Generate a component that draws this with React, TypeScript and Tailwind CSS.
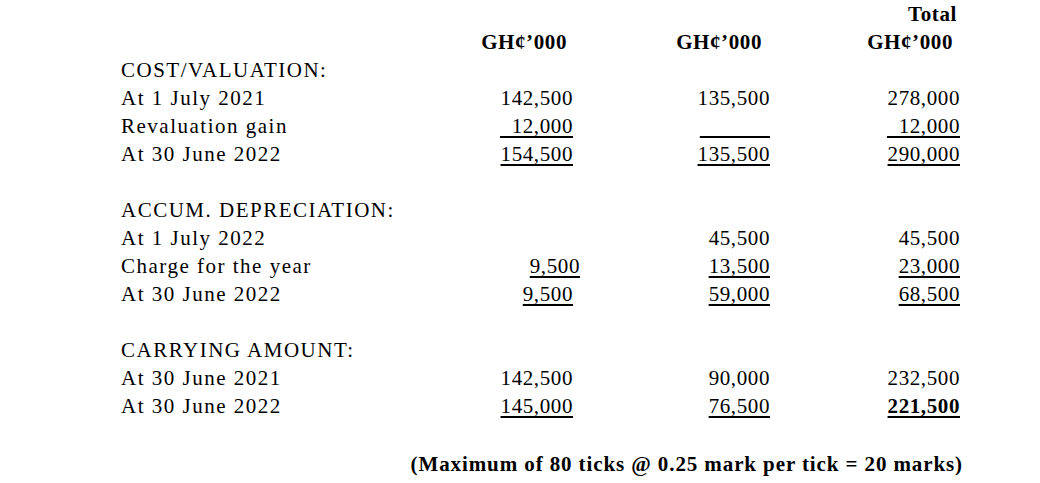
import React from "react";

// underlined figure, the way the source doc pads with spaces
const U = ({ children, bold = false }: { children: React.ReactNode; bold?: boolean }) => (
  <span
    className={`underline underline-offset-[3px] decoration-[1.5px] whitespace-pre ${bold ? "font-bold" : ""}`}
  >
    {children}
  </span>
);

type RowProps = {
  label?: React.ReactNode;
  c1?: React.ReactNode;
  c2?: React.ReactNode;
  c3?: React.ReactNode;
};

const Row = ({ label, c1, c2, c3 }: RowProps) => (
  <>
    <div className="h-[28px] whitespace-nowrap tracking-[1.5px]">{label}</div>
    <div className="h-[28px] text-right whitespace-nowrap">{c1}</div>
    <div className="h-[28px] text-right whitespace-nowrap">{c2}</div>
    <div className="h-[28px] text-right whitespace-nowrap">{c3}</div>
  </>
);

const sp = (n: number) => "\u00a0".repeat(n);

const App: React.FC = () => {
  return (
    <div
      className="w-[1040px] h-[483px] bg-white text-black text-[21px] leading-[28px] tracking-[0.6px] overflow-hidden"
      style={{ fontFamily: '"Liberation Serif", "Times New Roman", serif' }}
    >
      <div className="grid grid-cols-[352px_100px_197px_190px] pl-[121px]">
        {/* column headings */}
        <Row c3={<span className="font-bold pr-[3px]">Total</span>} />
        <Row
          c1={<span className="font-bold pr-[6px]">GH¢’000</span>}
          c2={<span className="font-bold pr-[8px]">GH¢’000</span>}
          c3={<span className="font-bold pr-[7px]">GH¢’000</span>}
        />

        {/* Cost / valuation */}
        <Row label="COST/VALUATION:" />
        <Row label="At 1 July 2021" c1="142,500" c2="135,500" c3="278,000" />
        <Row
          label="Revaluation gain"
          c1={<U>{sp(2) + "12,000"}</U>}
          c2={<U>{sp(12)}</U>}
          c3={<U>{sp(2) + "12,000"}</U>}
        />
        <Row label="At 30 June 2022" c1={<U>154,500</U>} c2={<U>135,500</U>} c3={<U>290,000</U>} />
        <Row />

        {/* Accumulated depreciation */}
        <Row label="ACCUM. DEPRECIATION:" />
        <Row label="At 1 July 2022" c2="45,500" c3="45,500" />
        <Row
          label="Charge for the year"
          c1={
            <span className="-mr-[7px]">
              <U>9,500</U>
            </span>
          }
          c2={<U>13,500</U>}
          c3={<U>23,000</U>}
        />
        <Row label="At 30 June 2022" c1={<U>9,500</U>} c2={<U>59,000</U>} c3={<U>68,500</U>} />
        <Row />

        {/* Carrying amount */}
        <Row label="CARRYING AMOUNT:" />
        <Row label="At 30 June 2021" c1="142,500" c2="90,000" c3="232,500" />
        <Row
          label="At 30 June 2022"
          c1={<U>145,000</U>}
          c2={<U>76,500</U>}
          c3={<U bold>221,500</U>}
        />
      </div>

      <div className="mt-[30px] flex justify-end pr-[77px] font-bold tracking-[0.9px] whitespace-nowrap">
        (Maximum of 80 ticks @ 0.25 mark per tick = 20 marks)
      </div>
    </div>
  );
};

export default App;
